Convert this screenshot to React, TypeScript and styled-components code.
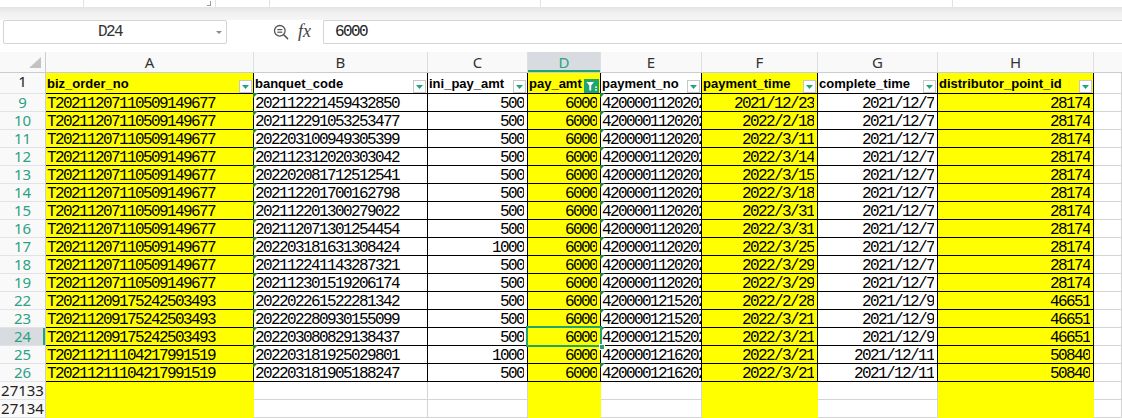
import React from 'react';
import styled, { createGlobalStyle, css } from 'styled-components';

const TEAL = '#2ba283';
const GREEN = '#21a46f';
const YELLOW = '#ffff00';
const GRID = '#d4d4d4';
const HEAD_BG = '#f9f9f9';
const HEAD_LINE = '#c9ccd1';
const ACTIVE_BG = '#d8dbe0';

const GlobalStyle = createGlobalStyle`
  html, body { margin: 0; padding: 0; background: #fff; }
  body { overflow: hidden; }
  #root { width: 1122px; height: 418px; overflow: hidden; }
`;

const Page = styled.div`
  width: 1122px;
  height: 418px;
  overflow: hidden;
  background: #fff;
  display: flex;
  flex-direction: column;
  font-family: "Noto Sans", "Liberation Sans", sans-serif;
`;

const RibbonEdge = styled.div`
  height: 7px;
  flex: none;
  display: flex;
  background: #fff;
`;

const RibbonGroup = styled.div<{ $w: number }>`
  width: ${p => p.$w}px;
  flex: none;
  border-right: 1px solid #e2e2e2;
  display: flex;
  justify-content: flex-end;
  align-items: flex-start;
`;

const Launcher = styled.span`
  width: 3px;
  height: 4px;
  margin: 1px 4px 0 0;
  border-right: 1px solid #9a9a9a;
  border-bottom: 1px solid #9a9a9a;
`;

const Shade = styled.div`
  height: 13px;
  flex: none;
  background: linear-gradient(#e3e3e3, #f0f0f0 45%, #f6f6f6);
`;

const FormulaBar = styled.div`
  height: 24px;
  flex: none;
  display: flex;
  align-items: stretch;
  padding-left: 3px;
`;

const monoText = css`
  font-family: "Liberation Mono", monospace;
  font-size: 16px;
  letter-spacing: -1.6px;
`;

const NameBox = styled.div`
  box-sizing: border-box;
  width: 224px;
  flex: none;
  border: 1px solid #d4d4d4;
  border-radius: 2px;
  display: flex;
  align-items: center;
`;

const NameText = styled.span`
  ${monoText};
  flex: 1;
  text-align: center;
  color: #333;
`;

const Caret = styled.span`
  width: 0;
  height: 0;
  border-left: 3px solid transparent;
  border-right: 3px solid transparent;
  border-top: 3px solid #8c8c8c;
  margin-right: 4px;
`;

const FxArea = styled.div`
  width: 96px;
  flex: none;
  display: flex;
  align-items: center;
  padding-left: 46px;
  box-sizing: border-box;
  gap: 9px;
`;

const Fx = styled.span`
  font-family: "Liberation Serif", serif;
  font-style: italic;
  font-size: 18px;
  color: #444;
  line-height: 1;
  margin-top: -2px;
`;

const FormulaInput = styled.div`
  flex: 1;
  border: 1px solid #d4d4d4;
  border-right: none;
  border-radius: 2px 0 0 2px;
  padding-left: 11px;
  display: flex;
  align-items: center;
  ${monoText};
  color: #222;
`;

const Sheet = styled.div`
  margin-top: 8px;
  display: grid;
  grid-template-columns: 46px 208px 174px 100px 73px 101px 116px 120px 156px 28px;
  grid-template-rows: 21px 21px repeat(18, 18px);
`;

const Corner = styled.div`
  box-sizing: border-box;
  background: ${HEAD_BG};
  border-right: 1px solid ${HEAD_LINE};
  border-bottom: 1px solid ${HEAD_LINE};
  display: flex;
  align-items: flex-end;
  justify-content: flex-end;
  padding: 0 4px 4px 0;
`;

const ColHead = styled.div<{ $active?: boolean; $last?: boolean }>`
  box-sizing: border-box;
  background: ${p => (p.$active ? ACTIVE_BG : HEAD_BG)};
  border-right: ${p => (p.$last ? 'none' : '1px solid #dcdee2')};
  border-bottom: 1px solid ${HEAD_LINE};
  box-shadow: ${p => (p.$active ? `inset 0 -2px 0 ${GREEN}` : 'none')};
  color: ${p => (p.$active ? TEAL : '#333')};
  font-size: 15px;
  line-height: 20px;
  text-align: center;
`;

const RowHead = styled.div<{ $filtered?: boolean; $active?: boolean }>`
  box-sizing: border-box;
  background: ${p => (p.$active ? ACTIVE_BG : HEAD_BG)};
  border-right: 1px solid ${HEAD_LINE};
  border-bottom: 1px solid #e1e3e6;
  box-shadow: ${p => (p.$active ? `inset -2px 0 0 ${GREEN}` : 'none')};
  color: ${p => (p.$filtered ? TEAL : '#222')};
  font-size: 15px;
  line-height: 17px;
  text-align: center;
  white-space: nowrap;
`;

type Line = 'black' | 'grid' | 'fill';

const lineColor = (l: Line) => (l === 'black' ? '#000' : l === 'grid' ? GRID : YELLOW);

const cellBase = css<{ $fill?: boolean; $line: Line }>`
  position: relative;
  box-sizing: border-box;
  background: ${p => (p.$fill ? YELLOW : '#fff')};
  border-right: 1px solid ${p => lineColor(p.$line)};
  border-bottom: 1px solid ${p => lineColor(p.$line)};
  min-width: 0;
`;

const Cell = styled.div<{ $fill?: boolean; $line: Line; $align?: 'left' | 'right'; $mark?: boolean }>`
  ${cellBase};
  ${monoText};
  color: #000;
  line-height: 16px;
  padding: 2px ${p => (p.$align === 'right' ? '3px' : '0')} 0 1px;
  text-align: ${p => p.$align || 'left'};
  white-space: nowrap;

  ${p =>
    p.$mark &&
    css`
      &::before {
        content: '';
        position: absolute;
        top: -1px;
        left: -1px;
        border-top: 5px solid #1f8a3c;
        border-right: 5px solid transparent;
      }
    `}
`;

const Value = styled.span`
  display: block;
  overflow: hidden;
`;

const TitleCell = styled.div<{ $fill?: boolean; $line: Line }>`
  ${cellBase};
  display: flex;
  align-items: center;
  justify-content: space-between;
  padding: 0 1px 0 1px;
  font-family: "Liberation Sans", Arial, sans-serif;
  font-weight: 700;
  font-size: 13px;
  color: #000;
  white-space: nowrap;
`;

const FilterBtn = styled.span<{ $active?: boolean }>`
  flex: none;
  align-self: flex-end;
  box-sizing: border-box;
  width: ${p => (p.$active ? 15 : 13)}px;
  height: ${p => (p.$active ? 14 : 13)}px;
  background: ${p => (p.$active ? GREEN : '#fff')};
  border: ${p => (p.$active ? 'none' : '1px solid #c8c8c8')};
  display: flex;
  align-items: center;
  justify-content: center;
`;

const Selection = styled.span`
  position: absolute;
  top: -2px;
  left: -2px;
  right: -2px;
  bottom: -2px;
  border: 2px solid ${GREEN};
  z-index: 3;
  pointer-events: none;
`;

const Handle = styled.span`
  position: absolute;
  right: -5px;
  bottom: -5px;
  width: 6px;
  height: 6px;
  box-sizing: border-box;
  background: ${GREEN};
  border: 1px solid #fff;
  z-index: 4;
`;

type Col = {
  letter: string;
  title: string;
  fill: boolean;
  align: 'left' | 'right';
  mark?: boolean;
  filtered?: boolean;
};

const COLS: Col[] = [
  { letter: 'A', title: 'biz_order_no', fill: true, align: 'left' },
  { letter: 'B', title: 'banquet_code', fill: false, align: 'left', mark: true },
  { letter: 'C', title: 'ini_pay_amt', fill: false, align: 'right' },
  { letter: 'D', title: 'pay_amt', fill: true, align: 'right', filtered: true },
  { letter: 'E', title: 'payment_no', fill: false, align: 'left', mark: true },
  { letter: 'F', title: 'payment_time', fill: true, align: 'right' },
  { letter: 'G', title: 'complete_time', fill: false, align: 'right' },
  { letter: 'H', title: 'distributor_point_id', fill: true, align: 'right' },
];

const A1 = 'T20211207110509149677';
const A2 = 'T20211209175242503493';
const A3 = 'T20211211104217991519';
const E1 = '4200001120202';
const E2 = '4200001215202';
const E3 = '4200001216202';

const ROWS: [string, string[]][] = [
  ['9', [A1, '202112221459432850', '500', '6000', E1, '2021/12/23', '2021/12/7', '28174']],
  ['10', [A1, '202112291053253477', '500', '6000', E1, '2022/2/18', '2021/12/7', '28174']],
  ['11', [A1, '202203100949305399', '500', '6000', E1, '2022/3/11', '2021/12/7', '28174']],
  ['12', [A1, '202112312020303042', '500', '6000', E1, '2022/3/14', '2021/12/7', '28174']],
  ['13', [A1, '202202081712512541', '500', '6000', E1, '2022/3/15', '2021/12/7', '28174']],
  ['14', [A1, '202112201700162798', '500', '6000', E1, '2022/3/18', '2021/12/7', '28174']],
  ['15', [A1, '202112201300279022', '500', '6000', E1, '2022/3/31', '2021/12/7', '28174']],
  ['16', [A1, '202112071301254454', '500', '6000', E1, '2022/3/31', '2021/12/7', '28174']],
  ['17', [A1, '202203181631308424', '1000', '6000', E1, '2022/3/25', '2021/12/7', '28174']],
  ['18', [A1, '202112241143287321', '500', '6000', E1, '2022/3/29', '2021/12/7', '28174']],
  ['19', [A1, '202112301519206174', '500', '6000', E1, '2022/3/29', '2021/12/7', '28174']],
  ['22', [A2, '202202261522281342', '500', '6000', E2, '2022/2/28', '2021/12/9', '46651']],
  ['23', [A2, '202202280930155099', '500', '6000', E2, '2022/3/21', '2021/12/9', '46651']],
  ['24', [A2, '202203080829138437', '500', '6000', E2, '2022/3/21', '2021/12/9', '46651']],
  ['25', [A3, '202203181925029801', '1000', '6000', E3, '2022/3/21', '2021/12/11', '50840']],
  ['26', [A3, '202203181905188247', '500', '6000', E3, '2022/3/21', '2021/12/11', '50840']],
];

const ACTIVE_ROW = '24';
const ACTIVE_COL = 'D';

const Magnifier = () => (
  <svg width="16" height="16" viewBox="0 0 16 16" fill="none">
    <circle cx="6.8" cy="6.8" r="5.3" stroke="#555" strokeWidth="1.3" />
    <line x1="4.3" y1="5.6" x2="9.3" y2="5.6" stroke="#555" strokeWidth="1.2" />
    <line x1="4.3" y1="8.2" x2="9.3" y2="8.2" stroke="#555" strokeWidth="1.2" />
    <line x1="10.7" y1="10.7" x2="14.6" y2="14.6" stroke="#555" strokeWidth="1.5" strokeLinecap="round" />
  </svg>
);

const DropArrow = () => (
  <svg width="7" height="4" viewBox="0 0 7 4">
    <polygon points="0,0 7,0 3.5,4" fill="#1fa67a" />
  </svg>
);

const FunnelIcon = () => (
  <svg width="15" height="14" viewBox="0 0 15 14">
    <polygon points="2.5,3 10,3 7.2,6.6 7.2,11.5 5.3,11.5 5.3,6.6" fill="#fff" />
    <rect x="11" y="7.5" width="2" height="1.3" fill="#fff" />
    <rect x="11" y="10.2" width="2" height="1.3" fill="#fff" />
  </svg>
);

export default function App() {
  return (
    <Page>
      <GlobalStyle />
      <RibbonEdge>
        <RibbonGroup $w={83} />
        <RibbonGroup $w={131}>
          <Launcher />
        </RibbonGroup>
        <RibbonGroup $w={53} />
        <RibbonGroup $w={270} />
        <RibbonGroup $w={411} />
      </RibbonEdge>
      <Shade />
      <FormulaBar>
        <NameBox>
          <NameText>D24</NameText>
          <Caret />
        </NameBox>
        <FxArea>
          <Magnifier />
          <Fx>fx</Fx>
        </FxArea>
        <FormulaInput>6000</FormulaInput>
      </FormulaBar>

      <Sheet>
        <Corner>
          <svg width="12" height="11" viewBox="0 0 12 11">
            <polygon points="12,0 12,11 0,11" fill="#c3c3c3" />
          </svg>
        </Corner>
        {COLS.map(c => (
          <ColHead key={c.letter} $active={c.letter === ACTIVE_COL}>
            {c.letter}
          </ColHead>
        ))}
        <ColHead $last />

        <RowHead>1</RowHead>
        {COLS.map(c => (
          <TitleCell key={c.letter} $fill={c.fill} $line="black">
            <span>{c.title}</span>
            <FilterBtn $active={c.filtered}>{c.filtered ? <FunnelIcon /> : <DropArrow />}</FilterBtn>
          </TitleCell>
        ))}
        <Cell $line="grid" />

        {ROWS.map(([n, vals]) => (
          <React.Fragment key={n}>
            <RowHead $filtered $active={n === ACTIVE_ROW}>
              {n}
            </RowHead>
            {COLS.map((c, i) => {
              const active = n === ACTIVE_ROW && c.letter === ACTIVE_COL;
              return (
                <Cell key={c.letter} $fill={c.fill} $line="black" $align={c.align} $mark={c.mark}>
                  <Value>{vals[i]}</Value>
                  {active && (
                    <Selection>
                      <Handle />
                    </Selection>
                  )}
                </Cell>
              );
            })}
            <Cell $line="grid" />
          </React.Fragment>
        ))}

        {['27133', '27134'].map(n => (
          <React.Fragment key={n}>
            <RowHead>{n}</RowHead>
            {COLS.map(c => (
              <Cell key={c.letter} $fill={c.fill} $line={c.fill ? 'fill' : 'grid'} />
            ))}
            <Cell $line="grid" />
          </React.Fragment>
        ))}
      </Sheet>
    </Page>
  );
}
